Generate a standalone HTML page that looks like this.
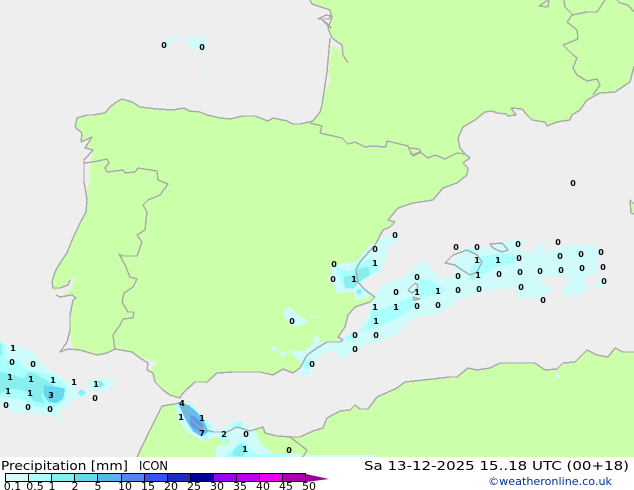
<!DOCTYPE html>
<html><head><meta charset="utf-8"><style>
html,body{margin:0;padding:0;background:#fff;width:634px;height:490px;overflow:hidden}
svg{display:block}
text{font-family:"DejaVu Sans","Liberation Sans",sans-serif}
.n text{font-size:8px;font-weight:bold;text-anchor:middle;fill:#000}
.c{fill:none;stroke:#a8a8a8;stroke-width:1.4;stroke-linejoin:round}
.l text{font-size:11px;text-anchor:middle;fill:#000}
</style></head><body>
<svg width="634" height="490" viewBox="0 0 634 490" xmlns="http://www.w3.org/2000/svg">
<rect width="634" height="457" fill="#eeeeee"/>
<!-- land -->
<path fill="#ccffaa" d="M310,0 L312,4 L330,10 L332,18 L329,28 L331,38 L332,45 L328,72 L331,80 L325,90 L321,110 L313,121 L300,124 L293,124 L287,121 L273,118 L268,121 L255,116 L243,116 L230,119 L220,118 L207,115 L200,112 L189,110 L184,108 L173,110 L157,109 L140,107 L132,102 L122,99 L115,103 L110,109 L105,113 L93,115 L87,115 L77,118 L75,127 L82,133 L81,142 L92,137 L85,148 L93,150 L90,165 L90,180 L87,190 L87,200 L86,212 L80,223 L73,238 L67,253 L60,263 L55,272 L52,282 L53,292 L65,284 L76,276 L70,290 L62,296 L72,295 L76,298 L73,300 L70,315 L69,330 L72,345 L75,350 L97,355 L107,353 L115,349 L132,352 L140,358 L157,362 L148,372 L153,373 L155,382 L163,390 L170,394 L180,397 L183,393 L195,382 L207,382 L217,373 L233,372 L260,372 L273,375 L283,369 L293,373 L298,370 L305,355 L317,348 L327,342 L340,342 L343,340 L338,337 L345,327 L348,315 L355,307 L370,302 L375,297 L365,290 L358,282 L356,270 L360,262 L375,245 L383,230 L390,227 L395,222 L388,220 L398,208 L413,203 L433,200 L443,188 L457,183 L467,175 L468,168 L463,163 L470,158 L465,154 L460,148 L458,138 L463,127 L475,120 L485,112 L492,111 L497,113 L510,114 L507,116 L516,115 L511,108 L522,109 L527,115 L532,120 L545,124 L547,127 L557,122 L570,120 L572,115 L580,110 L587,100 L600,93 L615,92 L630,82 L634,66 L634,0 Z"/>
<path fill="#eeeeee" d="M331,37 L342,45 L343,55 L348,63 L340,50 L330,44 Z"/>
<path fill="#ccffaa" d="M137,457 L150,430 L162,406 L175,404 L182,403 L190,418 L200,428 L213,432 L227,432 L237,427 L250,431 L263,427 L265,433 L277,436 L292,437 L300,437 L313,431 L323,428 L327,418 L340,411 L350,410 L355,405 L360,409 L368,409 L377,397 L397,388 L405,382 L433,379 L450,377 L457,377 L468,368 L477,370 L490,368 L500,363 L535,363 L545,370 L557,369 L563,363 L575,362 L587,350 L597,355 L608,357 L615,348 L623,352 L634,352 L634,457 Z"/>
<path fill="#ccffaa" d="M450,263 L463,255 L473,258 L470,270 L460,267 Z"/>
<path fill="#ccffaa" d="M630,201 L634,205 L634,214 L631,213 Z"/>

<!-- east precipitation, authored in crop coords -->
<g transform="translate(270,220) scale(.33333)">
<path fill="#d0fbfb" d="M205,360 L270,330 L295,285 L305,245 L330,205 L350,190 L400,170 L440,135 L465,125 L490,150 L500,170 L530,175 L565,160 L540,130 L585,85 L640,85 L710,65 L770,55 L750,90 L790,100 L800,75 L830,65 L815,100 L900,75 L985,78 L985,160 L945,170 L945,220 L870,232 L905,165 L800,175 L850,205 L815,235 L740,232 L735,205 L660,210 L590,230 L560,240 L540,265 L490,285 L430,295 L395,325 L380,345 L330,365 L290,375 L225,408 L200,415 L200,395 L170,395 L130,430 L125,465 L85,468 L95,430 L60,395 L30,405 L60,390 L100,395 L130,370 Z"/>
<path fill="#d0fbfb" d="M180,140 L215,130 L260,125 L285,95 L300,75 L345,50 L385,40 L390,60 L350,80 L350,115 L330,160 L300,170 L270,190 L310,220 L290,235 L260,240 L250,215 L200,220 L190,190 L170,180 L190,155 Z"/>
<path fill="#d0fbfb" d="M40,270 L60,262 L80,280 L115,305 L95,315 L70,320 L45,295 Z"/>
<path fill="#d0fbfb" d="M140,347 L153,360 L140,373 L127,360 Z M12,377 L22,387 L12,397 L2,387 Z M38,392 L48,402 L38,412 L28,402 Z M122,288 H145 V292 H122 Z M968,200 L1005,170 L1010,190 L985,210 Z M862,455 L869,467 L862,479 L855,467 Z"/>
<path fill="#aaffff" d="M195,140 L240,155 L260,130 L305,115 L330,150 L300,165 L270,185 L250,205 L220,200 L205,170 Z"/>
<path fill="#aaffff" d="M275,335 L300,295 L305,260 L330,270 L400,240 L430,230 L440,250 L420,270 L370,300 L330,320 Z"/>
<path fill="#aaffff" d="M440,175 L480,180 L530,212 L480,228 L450,235 L440,220 L450,200 Z"/>
<path fill="#aaffff" d="M595,180 L605,140 L630,110 L690,100 L735,105 L735,130 L680,140 L640,165 Z"/>
<path fill="#aaffff" d="M575,92 L620,88 L612,104 L585,96 Z M225,350 L250,338 L250,358 L232,362 Z M95,420 L125,415 L115,450 L100,445 Z M255,205 L280,212 L268,232 Z"/>
<path fill="#88eeee" d="M220,170 L250,165 L270,145 L295,140 L300,165 L275,180 L250,205 L225,205 Z"/>
<path fill="#88eeee" d="M258,215 L267,206 L276,215 L267,224 Z"/>
</g>

<!-- Bay of Biscay rain -->
<path fill="#d0fbfb" d="M162,43 L170,37 L175,38 L178,34 L180,41 L171,43 L165,48 Z M184,42 L190,37 L204,37 L207,47 L196,50 Z M204,70 h3v3h-3z M191,83 L194,87 L191,87 Z M573,178 L577,173 L573,172 Z M570,186 L578,186 L574,189 Z"/>

<!-- Atlantic blob -->
<g transform="translate(0,335) scale(.33333)">
<path fill="#d0fbfb" d="M0,20 L30,30 L75,40 L105,55 L130,90 L165,115 L205,140 L225,160 L260,170 L268,178 L245,192 L215,195 L205,215 L175,235 L188,268 L165,245 L130,240 L90,235 L40,230 L0,210 Z"/>
<path fill="#d0fbfb" d="M258,145 L290,128 L340,130 L342,158 L295,172 L262,165 Z"/>
<path fill="#aaffff" d="M0,20 L15,30 L15,70 L60,80 L70,100 L110,110 L160,120 L200,155 L195,195 L170,215 L140,220 L100,215 L70,195 L0,185 Z"/>
<path fill="#88eeee" d="M0,110 L40,120 L70,130 L90,110 L140,135 L165,155 L130,150 L125,185 L135,205 L100,200 L80,170 L40,160 L0,175 Z"/>
<path fill="#66d8f0" d="M130,150 L165,155 L195,160 L190,190 L170,205 L145,200 L130,180 Z"/>
<path fill="#88eeee" d="M245,162 L257,173 L245,184 L233,173 Z M285,150 L300,135 L315,150 L300,158 Z M0,25 L5,25 L5,60 L0,60 Z"/>
</g>

<!-- Gibraltar / Morocco rain -->
<g transform="translate(160,390) scale(.33333)">
<path fill="#d0fbfb" d="M45,40 L65,30 L100,45 L130,80 L155,100 L180,125 L205,100 L235,90 L250,100 L285,118 L300,160 L345,195 L420,190 L420,201 L170,201 L165,175 L180,165 L210,165 L205,145 L160,140 L130,155 L105,140 L80,125 L55,90 Z"/>
<path fill="#d0fbfb" d="M180,75 L192,68 L203,75 L192,82 Z"/>
<path fill="#aaffff" d="M45,40 L70,35 L100,50 L125,85 L150,105 L155,125 L140,150 L115,135 L85,110 L70,75 Z"/>
<path fill="#aaffff" d="M190,201 L220,175 L245,150 L275,180 L295,195 L400,190 L400,201 Z M215,102 L245,95 L245,115 L215,115 Z M183,125 L205,130 L195,165 L180,150 Z"/>
<path fill="#66bbf0" d="M55,40 L85,45 L115,70 L135,100 L145,125 L125,140 L100,125 L75,85 Z"/>
<path fill="#88eeee" d="M225,175 L245,160 L260,185 L245,201 L215,195 Z"/>
<path fill="#5a99ee" d="M85,75 L105,80 L130,105 L120,125 L95,110 Z"/>
</g>
<rect x="280" y="455" width="97" height="2" fill="#d0fbfb"/>

<!-- coastlines -->
<g class="c" shape-rendering="crispEdges">
<path d="M310,0 L312,4 L330,10 L332,18 L328,28 L332,38 L342,45 L343,55 L348,63 M330,38 L327,72 L322,105 L320,112 L313,121 L300,124 L293,124 L287,121 L273,118 L268,121 L255,116 L243,116 L230,119 L220,118 L207,115 L200,112 L189,111 L184,108 L173,110 L157,109 L140,107 L132,102 L122,99 L115,103 L110,107 L105,113 L93,115 L87,115 L77,118 L75,127 L82,133 L81,142 L92,137 L85,148 L93,150 L84,160 L84,182 L85,187 L87,200 L86,212 L80,223 L73,238 L67,253 L60,263 L55,272 L52,282 L53,288 L60,288 L68,285 L70,280 M56,295 L60,297 L72,295 L76,298 L73,300 L70,315 L70,330 L67,342 L60,352 L68,349 L80,350 L97,355 L107,353 L115,349 L132,352 L140,358 L148,363 L147,370 L153,373 L155,382 L163,390 L170,395 L180,398 L183,393 L195,382 L207,382 L217,373 L233,372 L260,372 L273,375 L283,369 L293,373 L300,368 L307,355 L317,348 L327,342 L340,342 L343,340 L338,337 L345,327 L348,315 L355,307 L370,302 L375,297 L365,290 L358,282 L356,270 L360,262 L375,245 L383,230 L390,227 L395,222 L388,220 L398,208 L413,203 L433,200 L443,188 L457,183 L467,175 L468,168 L463,163 L470,158 L465,154 L460,148 L458,138 L463,127 L475,120 L485,112 L492,111 L497,113 L507,114 L507,116 L516,115 L511,108 L522,109 L527,115 L532,120 L545,122 L547,126 L557,122 L570,120 L572,115 L580,110 L587,100 L600,93 L615,92 L630,82 L634,66"/>
<path d="M310,123 L322,126 L320,133 L342,138 L348,144 L355,142 L365,147 L372,146 L386,147 L387,141 L408,146 L412,155 L420,152 L428,158 L435,155 L445,159 L457,153 L465,154"/>
<path d="M410,148 L419,149 L421,152 L413,156 L410,153"/>
<path d="M318,19 L326,15 L331,16 L329,19 Z M322,20 L328,24 L331,28 L326,24 Z"/>
<path d="M593,95 L600,85 L597,79 L587,81 L577,75 L573,68 L577,58 L572,54 L563,45 L578,39 L577,30 L567,22 L572,15 L587,12 L597,12 L605,0 M564,0 L565,7 L573,15 M617,0 L620,3 L628,5 L634,12 M539,6 L548,7 L549,0 M539,6 L545,2 L548,0"/>
<path d="M630,200 L634,204 M630,200 L631,213 L634,214"/>
<path d="M84,163 L93,162 L107,159 L109,163 L105,168 L107,172 L123,170 L125,173 L135,172 L138,168 L157,171 L158,180 L168,184 L160,195 L148,200 L143,205 L147,212 L145,230 L137,235 L142,242 L137,256 L123,256 L119,254 L125,265 L130,277 L137,279 L133,287 L124,293 L122,302 L128,312 L134,312 L133,318 L123,319 L120,325 L113,335 L115,350"/>
<path d="M137,457 L150,430 L162,406 L175,404 L182,402 L190,418 L200,428 L213,432 L227,432 L237,427 L250,431 L263,427 L265,433 L277,436 L292,437 L300,437 L313,431 L323,428 L327,418 L340,411 L350,410 L355,405 L360,409 L368,409 L377,397 L397,388 L405,382 L433,379 L450,377 L457,377 L468,368 L477,370 L490,368 L500,363 L535,363 L545,370 L557,369 L563,363 L575,362 L587,350 L597,355 L608,357 L615,348 L623,352 L634,352"/>
<path d="M290,437 L307,450 L303,457"/>
<path d="M445,263 L453,255 L467,250 L477,255 L482,262 L477,272 L470,275 L462,270 L455,265 Z"/>
<path d="M490,244 L502,243 L508,250 L502,252 L493,248 Z"/>
<path d="M408,290 L415,283 L418,285 L417,290 L412,293 Z M413,297 L420,299 L414,300 Z"/>
</g>

<!-- value labels -->
<g class="n">
<text x="395" y="238">0</text><text x="375" y="252">0</text><text x="334" y="267">0</text><text x="333" y="282">0</text><text x="354" y="282">1</text><text x="375" y="266">1</text><text x="417" y="280">0</text><text x="396" y="295">0</text><text x="417" y="295">1</text><text x="438" y="294">1</text><text x="458" y="293">0</text><text x="479" y="292">0</text><text x="375" y="310">1</text><text x="396" y="310">1</text><text x="417" y="309">0</text><text x="438" y="308">0</text><text x="376" y="324">1</text><text x="355" y="338">0</text><text x="376" y="338">0</text><text x="355" y="352">0</text><text x="312" y="367">0</text><text x="292" y="324">0</text>
<text x="456" y="250">0</text><text x="477" y="250">0</text><text x="518" y="247">0</text><text x="558" y="245">0</text><text x="560" y="259">0</text><text x="581" y="257">0</text><text x="601" y="255">0</text><text x="477" y="263">1</text><text x="498" y="263">1</text><text x="519" y="261">0</text><text x="458" y="279">0</text><text x="478" y="278">1</text><text x="499" y="277">0</text><text x="520" y="275">0</text><text x="540" y="274">0</text><text x="561" y="273">0</text><text x="582" y="271">0</text><text x="603" y="270">0</text><text x="604" y="284">0</text><text x="521" y="290">0</text><text x="543" y="303">0</text>
<text x="573" y="186">0</text><text x="164" y="48">0</text><text x="202" y="50">0</text>
<text x="13" y="351">1</text><text x="12" y="365">0</text><text x="33" y="367">0</text><text x="10" y="380">1</text><text x="31" y="382">1</text><text x="53" y="383">1</text><text x="74" y="385">1</text><text x="96" y="387">1</text><text x="8" y="394">1</text><text x="30" y="396">1</text><text x="51" y="398">3</text><text x="95" y="401">0</text><text x="6" y="408">0</text><text x="28" y="410">0</text><text x="50" y="412">0</text>
<text x="182" y="406">4</text><text x="181" y="420">1</text><text x="202" y="421">1</text><text x="202" y="436">7</text><text x="224" y="437">2</text><text x="246" y="437">0</text><text x="245" y="452">1</text><text x="289" y="453">0</text>
</g>

<!-- footer -->
<rect y="457" width="634" height="33" fill="#fff"/>
<text x="1" y="470" font-size="12" textLength="127" lengthAdjust="spacingAndGlyphs">Precipitation [mm]</text>
<text x="139" y="470" font-size="12" textLength="29" lengthAdjust="spacingAndGlyphs">ICON</text>
<text x="364" y="470" font-size="12" textLength="265" lengthAdjust="spacingAndGlyphs">Sa 13-12-2025 15..18 UTC (00+18)</text>
<text x="488" y="485" font-size="11" fill="#003399" textLength="124" lengthAdjust="spacingAndGlyphs">©weatheronline.co.uk</text>

<g shape-rendering="crispEdges" stroke="#000" stroke-width="1">
<rect x="5.5" y="473.5" width="23" height="8" fill="#d4fcfc"/>
<rect x="28.5" y="473.5" width="23" height="8" fill="#aaffff"/>
<rect x="51.5" y="473.5" width="23" height="8" fill="#88eeee"/>
<rect x="74.5" y="473.5" width="23" height="8" fill="#66d8f0"/>
<rect x="97.5" y="473.5" width="24" height="8" fill="#5ab4ee"/>
<rect x="121.5" y="473.5" width="23" height="8" fill="#5588ee"/>
<rect x="144.5" y="473.5" width="23" height="8" fill="#3355ee"/>
<rect x="167.5" y="473.5" width="23" height="8" fill="#1c2fbc"/>
<rect x="190.5" y="473.5" width="23" height="8" fill="#000099"/>
<rect x="213.5" y="473.5" width="23" height="8" fill="#9900ee"/>
<rect x="236.5" y="473.5" width="23" height="8" fill="#bb00ee"/>
<rect x="259.5" y="473.5" width="23" height="8" fill="#ee00ee"/>
<rect x="282.5" y="473.5" width="23" height="8" fill="#aa00aa"/>
</g>
<path d="M306,474 L329,479 L306,482 Z" fill="#990099"/>
<g class="l">
<text x="12.5" y="490">0.1</text><text x="35" y="490">0.5</text><text x="52" y="490">1</text><text x="75" y="490">2</text><text x="98" y="490">5</text><text x="125" y="490">10</text><text x="148" y="490">15</text><text x="171" y="490">20</text><text x="194" y="490">25</text><text x="217" y="490">30</text><text x="240" y="490">35</text><text x="263" y="490">40</text><text x="286" y="490">45</text><text x="309" y="490">50</text>
</g>
</svg>
</body></html>
